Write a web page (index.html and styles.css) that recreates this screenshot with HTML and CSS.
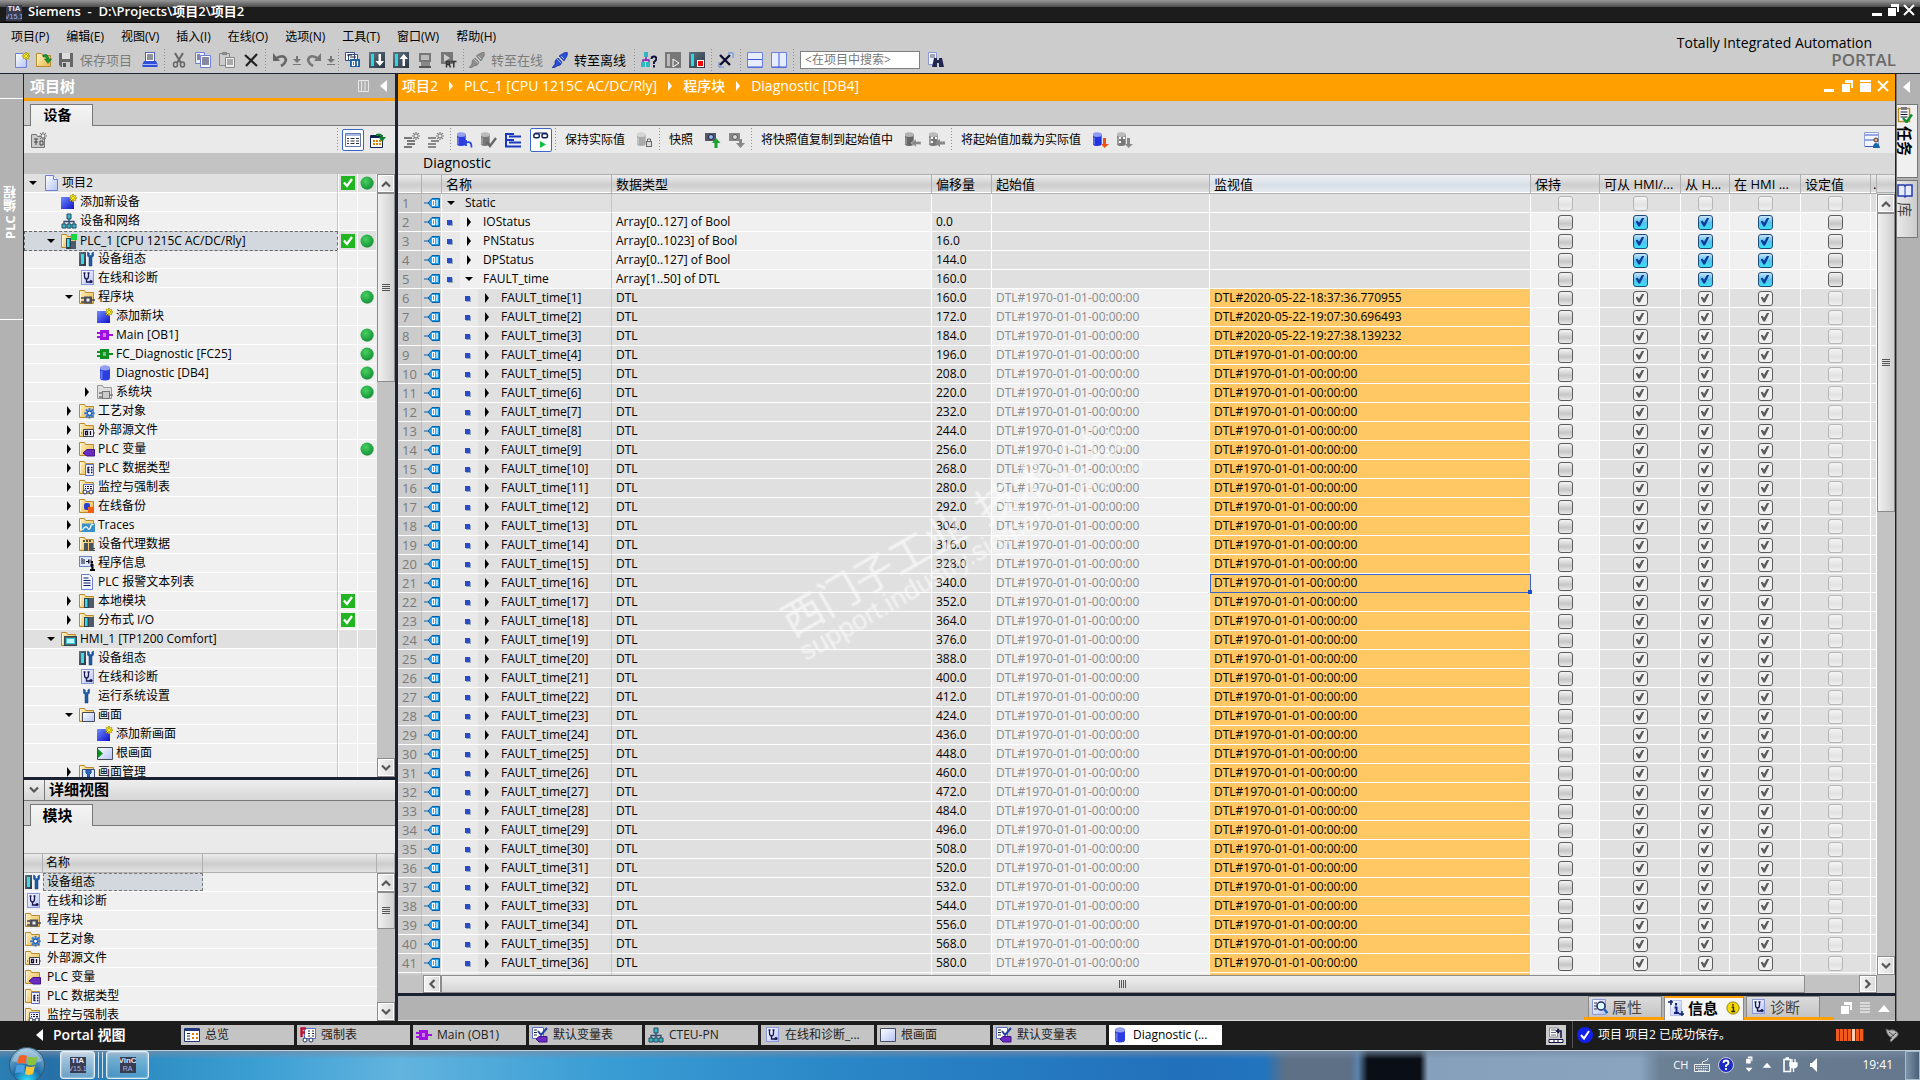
FILE: index.html
```html
<!DOCTYPE html>
<html lang="zh-CN">
<head>
<meta charset="utf-8">
<title>Siemens - D:\Projects\项目2\项目2</title>
<link rel="stylesheet" href="styles.css">
</head>
<body>
<svg class="defs" aria-hidden="true">
  <defs>
    <linearGradient id="gFold" x1="0" y1="0" x2="1" y2="1"><stop offset="0" stop-color="#fff3c0"/><stop offset="1" stop-color="#eab54a"/></linearGradient>
    <linearGradient id="gBlue" x1="0" y1="0" x2="1" y2="1"><stop offset="0" stop-color="#6f8cff"/><stop offset="1" stop-color="#1010c8"/></linearGradient>
    <linearGradient id="gPage" x1="0" y1="0" x2="1" y2="1"><stop offset="0" stop-color="#fff"/><stop offset="1" stop-color="#b4c2f4"/></linearGradient>
    <linearGradient id="gGray" x1="0" y1="0" x2="1" y2="1"><stop offset="0" stop-color="#c4c4c4"/><stop offset="1" stop-color="#666"/></linearGradient>
    <linearGradient id="gDark" x1="0" y1="0" x2="1" y2="1"><stop offset="0" stop-color="#5d7686"/><stop offset="1" stop-color="#2a3440"/></linearGradient>
    <radialGradient id="gGreen" cx=".4" cy=".35" r=".7"><stop offset="0" stop-color="#48d060"/><stop offset="1" stop-color="#109034"/></radialGradient>
    <radialGradient id="gOrb" cx=".5" cy=".95" r=".9"><stop offset="0" stop-color="#2fe0ff"/><stop offset=".45" stop-color="#1a6ca8"/><stop offset="1" stop-color="#8fb8d4"/></radialGradient>
    <g id="folder"><path d="M.5 14.500V1.500h5l1 2h8v11z" fill="url(#gFold)" stroke="#b98a2c"/><path d="M1.500 13V2.500" stroke="#fff6d8"/></g>
    <g id="star"><path d="M12 0v8M8 4h8M9.200 1.200l5.600 5.600M14.800 1.200L9.200 6.800" stroke="#8a7a00" stroke-width="1.600"/><path d="M12 .5v7M8.500 4h7M9.500 1.500l5 5M14.500 1.500l-5 5" stroke="#ffef20"/></g>
    <g id="graystar"><path d="M12 0v8M8 4h8M9.200 1.200l5.600 5.600M14.800 1.200L9.200 6.800" stroke="#777" stroke-width="1.200"/><circle cx="12" cy="4" r="1.400" fill="#eee"/></g>
    <g id="wrenchshape"><path d="M9.500 1v4l1.500 1.500V15h3V6.500L15.500 5V1l-1.700 1v2.500h-2.500V2z" fill="#1c5ba8" stroke="#123c78" stroke-width=".5"/></g>
    <g id="steth"><rect x="2.500" y=".5" width="12" height="14" fill="url(#gPage)" stroke="#8a98dc"/><path d="M5.500 3v3q0 3 2 3t2-3V3M7.500 9v3h3.500M4.500 3h2M8.500 3h2" fill="none" stroke="#181850" stroke-width="1.300"/><circle cx="12" cy="11.500" r="1.600" fill="#181850"/></g>
    <g id="blockshape"><path d="M0 6h4M0 10h4M12 8h4" stroke="currentColor" stroke-width="2"/><rect x="3" y="3" width="9" height="10" fill="currentColor"/><rect x="6" y="6" width="3" height="4" fill="#fff" opacity=".45"/></g>
    <g id="cyl"><path d="M3 3v10q0 2.500 5 2.500t5-2.500V3z" fill="currentColor"/><ellipse cx="8" cy="3" rx="5" ry="2.500" fill="currentColor"/><ellipse cx="8" cy="3" rx="5" ry="2.500" fill="#fff" opacity=".5"/><path d="M4.500 6v8" stroke="#fff" opacity=".3" stroke-width="2"/></g>
  </defs>
  <symbol id="i-page" viewBox="0 0 16 16"><path d="M2.500.5h8l4 4v11h-12z" fill="url(#gPage)" stroke="#6c80d8"/><path d="M10.500.5v4h4" fill="#fff" stroke="#6c80d8"/></symbol>
  <symbol id="i-new" viewBox="0 0 16 16"><path d="M1.500 1.500h8l3 3v11h-11z" fill="url(#gPage)" stroke="#6c80d8"/><use href="#star"/></symbol>
  <symbol id="i-open" viewBox="0 0 16 16"><use href="#folder"/><path d="M7 3q5-2 6 4h2.500L12 11.500 8.500 7H11q-1-3-4-2z" fill="#129a30" stroke="#0a6a20" stroke-width=".6"/></symbol>
  <symbol id="i-save" viewBox="0 0 16 16"><path d="M1 1h14v14H3l-2-2z" fill="#666"/><rect x="4" y="1" width="8" height="6" fill="#ddd"/><rect x="4" y="10" width="8" height="5" fill="#ccc"/><rect x="5" y="11" width="3" height="4" fill="#555"/></symbol>
  <symbol id="i-print" viewBox="0 0 16 16"><rect x="3.500" y=".5" width="9" height="9" fill="#fff" stroke="#5060b0"/><path d="M5 3h6M5 5h6M5 7h6" stroke="#223"/><path d="M2 9h12l1.500 3v3H.5v-3z" fill="#3050d8"/><path d="M1 12.500h14" stroke="#a8b8ff"/></symbol>
  <symbol id="i-cut" viewBox="0 0 16 16"><path d="M4 1l6 10M12 1L6 11" stroke="#666" stroke-width="2"/><ellipse cx="4.500" cy="12.500" rx="2" ry="2.500" fill="none" stroke="#666" stroke-width="1.500"/><ellipse cx="11.500" cy="12.500" rx="2" ry="2.500" fill="none" stroke="#666" stroke-width="1.500"/></symbol>
  <symbol id="i-copy" viewBox="0 0 16 16"><path d="M.5.5h9v11h-9z" fill="#eef" stroke="#6c80d8"/><path d="M2 3h3M2 5h3M2 7h3" stroke="#223"/><path d="M5.500 3.500h10v12h-10z" fill="#fff" stroke="#6c80d8"/><path d="M7 6h7M7 8h7M7 10h7M7 12h7" stroke="#114"/></symbol>
  <symbol id="i-paste" viewBox="0 0 16 16"><path d="M.5 1.500h10v12H.5z" fill="#ccc" stroke="#888"/><rect x="3" y="0" width="5" height="3" fill="#888"/><path d="M6.500 5.500h9v10h-9z" fill="#eee" stroke="#888"/><path d="M8 8h6M8 10h6M8 12h6" stroke="#666"/></symbol>
  <symbol id="i-x" viewBox="0 0 16 16"><path d="M2 3l12 11M14 2L3 14" stroke="#222" stroke-width="2.200"/></symbol>
  <symbol id="i-undo" viewBox="0 0 16 16"><path d="M3 7q9-6 11 1-1 4-5 6" fill="none" stroke="#666" stroke-width="2.600"/><path d="M1 1v8h7z" fill="#666"/></symbol>
  <symbol id="i-redo" viewBox="0 0 16 16"><path d="M13 7Q4 1 2 8q1 4 5 6" fill="none" stroke="#777" stroke-width="2.600"/><path d="M15 1v8H8z" fill="#777"/></symbol>
  <symbol id="i-drop" viewBox="0 0 8 16"><path d="M3 4h2v3h3L4 11 0 7h3zM0 12h8v1H0z" fill="#777"/></symbol>
  <symbol id="i-compile" viewBox="0 0 16 16"><path d="M.5.5h9v8h-9zM3.500 2.500h9v6h-9z" fill="#fff" stroke="#3a4a90"/><path d="M2 3h5M5 5h6" stroke="#223"/><rect x="5" y="7" width="10" height="8" fill="#2060a0"/><path d="M7.500 9.500h2v4h-2zM12.500 9v5" fill="none" stroke="#fff" stroke-width="1.200"/></symbol>
  <symbol id="i-dl" viewBox="0 0 16 16"><rect width="16" height="16" fill="url(#gDark)"/><rect x="2" y="2" width="3" height="12" fill="#2ed8e0"/><path d="M9.500 2h2.500v7h3l-4.200 5L6.500 9h3z" fill="#fff"/></symbol>
  <symbol id="i-ul" viewBox="0 0 16 16"><rect width="16" height="16" fill="url(#gDark)"/><rect x="2" y="2" width="3" height="12" fill="#2ed8e0"/><path d="M9.500 14h2.500V7h3l-4.200-5L6.500 7h3z" fill="#fff"/></symbol>
  <symbol id="i-pc" viewBox="0 0 16 16"><rect x="2" y="1" width="12" height="9" fill="#777"/><rect x="4" y="3" width="8" height="5" fill="#bbb"/><rect x="4" y="10" width="9" height="5" fill="#888"/><path d="M2 15h12" stroke="#555" stroke-width="2"/></symbol>
  <symbol id="i-rt" viewBox="0 0 16 16"><rect x="0" y="0" width="12" height="12" fill="#777"/><path d="M3 2l6 4-6 4z" fill="#ccc"/><path d="M5.500 15.500v-6H8.500v3H6M8 12.500l1.500 3M10 9.500h5.500M12.800 10v5.500" fill="none" stroke="#333" stroke-width="1.500"/></symbol>
  <symbol id="i-plug0" viewBox="0 0 16 16"><path d="M0 16l3-4q-1-4 3-6l4 4q-1 4-5 4l-3 2zM7 4l3-2q3-2 5-2 1 1 0 4l-3 5z" fill="#8e8e8e" stroke="#6a6a6a" stroke-width=".6"/><path d="M5 7l4 4M9 4l3 3" stroke="#c8c8c8"/></symbol>
  <symbol id="i-plug1" viewBox="0 0 16 16"><path d="M0 16l3-4q-1-4 3-6l4 4q-1 4-5 4l-3 2zM7 4l3-2q3-2 5-2 1 1 0 4l-3 5z" fill="#2a50d8" stroke="#102080" stroke-width=".6"/><path d="M5 7l4 4M9 4l3 3" stroke="#9bc0ff"/></symbol>
  <symbol id="i-nethelp" viewBox="0 0 16 16"><rect x="3" y="0" width="4" height="5" fill="#30b8c0"/><path d="M5 5v4M2 12V8h6v4" stroke="#8020b0" fill="none" stroke-width="1.400"/><rect y="10" width="4" height="5" fill="#30b8c0"/><rect x="5" y="10" width="4" height="5" fill="#30b8c0"/><path d="M10.500 7q0-2.500 2.500-2.500T15.200 7q0 1.500-2.200 3v2M13 13v2.500" fill="none" stroke="#101040" stroke-width="1.900"/></symbol>
  <symbol id="i-cpurun" viewBox="0 0 16 16"><rect width="16" height="16" fill="#777"/><rect x="2" y="2" width="3" height="12" fill="#bbb"/><path d="M8 7l6 4-6 4z" fill="#777" stroke="#fff"/></symbol>
  <symbol id="i-cpustop" viewBox="0 0 16 16"><rect width="16" height="16" fill="url(#gDark)"/><rect x="2" y="2" width="3" height="12" fill="#2ed8e0"/><rect x="8.500" y="8.500" width="6" height="6" fill="#f00" stroke="#fff"/></symbol>
  <symbol id="i-xref" viewBox="0 0 16 16"><path d="M10 1h5v5M1 10v5h5" fill="#cfe0ff" stroke="#5a80c8"/><path d="M2 3l10 10M12 3L2 13" stroke="#101030" stroke-width="2.400"/></symbol>
  <symbol id="i-splith" viewBox="0 0 16 16"><path d="M.5.5h15v15H.5z" fill="#e8ecff" stroke="#6c80e0"/><path d="M1 7.500h14M1 15h14" stroke="#3a58d8"/></symbol>
  <symbol id="i-splitv" viewBox="0 0 16 16"><path d="M.5.5h15v15H.5z" fill="#e8ecff" stroke="#6c80e0"/><path d="M8 1v14M1 15h14" stroke="#3a58d8"/></symbol>
  <symbol id="i-binoc" viewBox="0 0 16 16"><path d="M.5.5h8v12h-8z" fill="#f0f4ff" stroke="#8898d8"/><path d="M2 3h5M2 5h5" stroke="#556"/><path d="M6 6h3v2h2V6h3l2 9h-5v-4H9v4H4z" fill="#202850"/></symbol>
  <symbol id="i-addobj" viewBox="0 0 16 16"><rect x="0" y="3" width="13" height="12" fill="url(#gBlue)"/><use href="#star"/></symbol>
  <symbol id="i-net" viewBox="0 0 16 16"><path d="M8 5v4M3 12V8.500h10V12M8 8v4" fill="none" stroke="#304870" stroke-width="1.300"/><path d="M6 1h4v5H6zM1 11h4v4H1zM6 11h4v4H6zM11 11h4v4h-4z" fill="#35b8c8" stroke="#2a4a60"/></symbol>
  <symbol id="i-cfg" viewBox="0 0 16 16"><rect x="0" y="1" width="7" height="14" fill="url(#gDark)"/><rect x="2" y="3" width="3" height="10" fill="#3adbe8"/><use href="#wrenchshape" x="-1"/></symbol>
  <symbol id="i-diag" viewBox="0 0 16 16"><use href="#steth"/></symbol>
  <symbol id="i-wrench" viewBox="0 0 16 16"><use href="#wrenchshape" x="-5"/></symbol>
  <symbol id="i-fblock" viewBox="0 0 16 16"><use href="#folder"/><path d="M2 9h3M2 13h3M13 11h3" stroke="#445" stroke-width="1.400"/><rect x="5" y="7.500" width="8" height="7" fill="#4a4e5c"/><rect x="7.500" y="9.500" width="3" height="3" fill="#eee"/></symbol>
  <symbol id="i-fsys" viewBox="0 0 16 16"><path d="M.5 14.500V1.500h5l1 2h8v11z" fill="#ddd" stroke="#999"/><path d="M2 9h3M2 13h3M13 11h3" stroke="#777" stroke-width="1.400"/><rect x="5.500" y="7.500" width="7" height="7" fill="#ccc" stroke="#777"/></symbol>
  <symbol id="i-fgear" viewBox="0 0 16 16"><use href="#folder"/><path d="M10.500 5v10.500M5.200 10.200h10.500M7 6.500l7 7.500M14 6.500L7 14" stroke="#2a78e0" stroke-width="2"/><circle cx="10.500" cy="10.200" r="2" fill="#fff" stroke="#1850b0"/></symbol>
  <symbol id="i-fsrc" viewBox="0 0 16 16"><use href="#folder"/><path d="M4.500 7.500h10v7h-10zM3 11h-1M15 11h1" fill="#f4f4ff" stroke="#445"/><path d="M6.500 9.500h2v3h-2zM11.500 9v4" fill="none" stroke="#112" stroke-width="1.300"/></symbol>
  <symbol id="i-ftag" viewBox="0 0 16 16"><use href="#folder"/><path d="M4 12l4-3.500h7.500V15H8z" fill="#6a2cc0" stroke="#40148a"/></symbol>
  <symbol id="i-ftype" viewBox="0 0 16 16"><use href="#folder"/><path d="M6.500 4.500h8v11h-8z" fill="#f0f2ff" stroke="#5a70c8"/><path d="M9 7v6M9 7.500h1.500M9 10h1.500M9 12.500h1.500M12 7.500h1.500M12 10h1.500M12 12.500h1.500" stroke="#114" stroke-width="1.300"/></symbol>
  <symbol id="i-fwatch" viewBox="0 0 16 16"><use href="#folder"/><path d="M4.500 5.500h10v7h-10z" fill="#f0f2ff" stroke="#5a70c8"/><path d="M6 7.500h1M8 7.500h2M11 7.500h2M6 9.500h1M8 9.500h2M11 9.500h2" stroke="#114"/><circle cx="6" cy="13" r="2" fill="#fff" stroke="#223468"/><circle cx="12" cy="13" r="2" fill="#fff" stroke="#223468"/></symbol>
  <symbol id="i-fback" viewBox="0 0 16 16"><use href="#folder"/><rect x="5" y="5" width="6" height="7" rx="2" fill="#2a40d0"/><path d="M9 9h6v6H9z" fill="#f06010"/></symbol>
  <symbol id="i-ftrace" viewBox="0 0 16 16"><use href="#folder"/><path d="M3 6.500h13V15H3z" fill="#3a90c8"/><path d="M3.500 13q3-5 5-2t3-1 3-2" fill="none" stroke="#fff" stroke-width="1.300"/></symbol>
  <symbol id="i-fproxy" viewBox="0 0 16 16"><use href="#folder"/><path d="M5 7h4v8H5zM10 7h4v8h-4z" fill="#4a5260"/><path d="M4 5h2M7 5h2M10 5h2M15 12v1M15 14v1" stroke="#222" stroke-width="1.600"/></symbol>
  <symbol id="i-info" viewBox="0 0 16 16"><rect x=".5" y="1.500" width="12" height="10" fill="#e0e8ff" stroke="#7080b8"/><path d="M2 4h2M2 6h2M2 8h2M5 4v5M7 6.500h2M9.500 4.500v4M11 4.500v4" stroke="#112"/><path d="M13 6v2.500M11.500 10h2v5M11 15h5" stroke="#000" stroke-width="2"/></symbol>
  <symbol id="i-text" viewBox="0 0 16 16"><path d="M2.500.5h8l3 3v12h-11z" fill="#f4f6ff" stroke="#6c80d8"/><path d="M4.500 4h5M4.500 6.500h7M4.500 9h7M4.500 11.500h7" stroke="#102060" stroke-width="1.200"/></symbol>
  <symbol id="i-fmod" viewBox="0 0 16 16"><use href="#folder"/><rect x="5" y="5" width="5" height="10" fill="#31424e"/><rect x="6" y="6" width="2.500" height="8" fill="#3adbe8"/><rect x="10" y="5" width="5" height="10" fill="#4c5a6a"/></symbol>
  <symbol id="i-plc" viewBox="0 0 16 16"><use href="#folder"/><rect x="5" y="5" width="5" height="11" fill="#31424e"/><rect x="6" y="6" width="2.500" height="8" fill="#3adbe8"/><rect x="10" y="8" width="5" height="8" fill="#4c5a6a"/><rect x="10" y="1" width="6" height="6" fill="#10d840"/></symbol>
  <symbol id="i-hmi" viewBox="0 0 16 16"><use href="#folder"/><rect x="3.500" y="5.500" width="12" height="9" fill="#55636f" stroke="#3a4650"/><rect x="5.500" y="7.500" width="8" height="5" fill="#bff6ff" stroke="#38c8d8"/></symbol>
  <symbol id="i-fscreen" viewBox="0 0 16 16"><use href="#folder"/><path d="M3.500 5.500h12v9h-12z" fill="url(#gPage)" stroke="#444c5c"/></symbol>
  <symbol id="i-screen" viewBox="0 0 16 16"><path d="M.5 1.500h15v13H.5z" fill="url(#gPage)" stroke="#444c5c"/></symbol>
  <symbol id="i-root" viewBox="0 0 16 16"><path d="M.5 2.500h15v12H.5z" fill="url(#gPage)" stroke="#444c5c"/><path d="M1 4l5 4.500L1 13z" fill="#0d9020"/></symbol>
  <symbol id="i-fmgmt" viewBox="0 0 16 16"><use href="#folder"/><path d="M3.500 5.500h12v10h-12z" fill="#dfe6ff" stroke="#3a4a80"/><path d="M7 6v3l1.500 1.500V15h2v-4.500L12 9V6" fill="#2c68b8" stroke="#1a4a90"/></symbol>
  <symbol id="i-ob" viewBox="0 0 16 16"><use href="#blockshape" color="#a010e0"/></symbol>
  <symbol id="i-fc" viewBox="0 0 16 16"><use href="#blockshape" color="#109020"/></symbol>
  <symbol id="i-db" viewBox="0 0 16 16"><use href="#cyl" color="#2a3ee0"/></symbol>
  <symbol id="i-addgray" viewBox="0 0 16 16"><path d="M.5 15.500v-13h5l1 2h7v11z" fill="#ccc" stroke="#777"/><path d="M3 7h4M3 10h4M5 7v6M9 9h3v4H9z" stroke="#444" fill="none"/><use href="#graystar"/></symbol>
  <symbol id="i-list" viewBox="0 0 16 16"><path d="M.5 1.500h15v13H.5z" fill="#fff" stroke="#6478b0"/><path d="M1 3h14" stroke="#a8b8e0" stroke-width="2"/><path d="M2 6.500h2M5.500 6.500h4M11 6.500h3M2 9h2M5.500 9h4M11 9h3M2 11.500h2M5.500 11.500h4M11 11.500h3" stroke="#334"/></symbol>
  <symbol id="i-listgo" viewBox="0 0 16 16"><path d="M.5 3.500h12v12H.5z" fill="#fff" stroke="#102050"/><path d="M1 5h11" stroke="#102050" stroke-width="2"/><path d="M3 9h2M6 9h2M9 9h2M3 12h2M6 12h2M9 12h2" stroke="#e08000" stroke-width="2"/><path d="M6 2q6-2 7 3h3l-4 5-3.500-5H11q-1-2-5-1z" fill="#108030"/></symbol>
  <symbol id="i-rowadd" viewBox="0 0 16 16"><path d="M0 6h8M3 9h8M3 12h8M0 15h8" stroke="#777" stroke-width="2"/><use href="#graystar"/></symbol>
  <symbol id="i-rowadd2" viewBox="0 0 16 16"><path d="M0 6h8M3 9h8M0 12h8M0 15h8" stroke="#888" stroke-width="2"/><use href="#graystar"/></symbol>
  <symbol id="i-dbreset" viewBox="0 0 16 16"><g transform="translate(-3)scale(.9)"><use href="#cyl" color="#2a3ee0"/></g><path d="M9 8v6M9 10.500q6-2 5.500 5" stroke="#2848d8" fill="none" stroke-width="1.800"/></symbol>
  <symbol id="i-dbok" viewBox="0 0 16 16"><g transform="translate(-3)scale(.9)"><use href="#cyl" color="#777"/></g><path d="M6 10l3 4 6-8" stroke="#666" fill="none" stroke-width="2.400"/></symbol>
  <symbol id="i-levels" viewBox="0 0 16 16"><path d="M0 2h9M4 4.500h12M0 8h9M4 10.500h12M0 14.500h16" stroke="#1838c0" stroke-width="2"/><path d="M1 2v12" stroke="#1838c0" stroke-width="2"/></symbol>
  <symbol id="i-watch" viewBox="0 0 16 16"><path d="M2 1h12" stroke="#102060"/><rect x=".8" y="1.800" width="5.500" height="4" rx="1.500" fill="none" stroke="#102060" stroke-width="1.500"/><rect x="9" y="1.800" width="5.500" height="4" rx="1.500" fill="none" stroke="#102060" stroke-width="1.500"/><path d="M7 9l6 3.500L7 16z" fill="#10c040"/></symbol>
  <symbol id="i-dblock" viewBox="0 0 16 16"><g transform="translate(-3)scale(.9)"><use href="#cyl" color="#aaa"/></g><rect x="9.500" y="9.500" width="5" height="5" fill="#ddd" stroke="#666"/><path d="M10.500 9V7h3v2" fill="none" stroke="#666"/></symbol>
  <symbol id="i-snapup" viewBox="0 0 16 16"><path d="M0 1h11v8H0z" fill="#556"/><circle cx="6" cy="5" r="2.500" fill="#9ab8ff" stroke="#223"/><path d="M11 6l4.500 5H12.500v5h-3v-5H7z" fill="#18a030"/></symbol>
  <symbol id="i-snapdn" viewBox="0 0 16 16"><path d="M0 1h11v8H0z" fill="#888"/><circle cx="6" cy="5" r="2.500" fill="#ddd" stroke="#555"/><path d="M11.500 16L7 11h3V7h3v4h3z" fill="#888"/></symbol>
  <symbol id="i-dbleft" viewBox="0 0 16 16"><g transform="translate(-3)scale(.9)"><use href="#cyl" color="#666"/></g><path d="M6 11l5-4v2.500h5v3h-5V15z" fill="#888" stroke="#ddd" stroke-width=".5"/></symbol>
  <symbol id="i-dbdots" viewBox="0 0 16 16"><g transform="translate(-3)scale(.9)"><use href="#cyl" color="#777"/></g><path d="M2 6h2M6 6h2M2 10h2" stroke="#fff" stroke-width="2"/><path d="M6 11l5-4v2.500h5v3h-5V15z" fill="#888"/></symbol>
  <symbol id="i-dbload" viewBox="0 0 16 16"><g transform="translate(-3)scale(.9)"><use href="#cyl" color="#2034e0"/></g><path d="M11.500 16L8 12h2V6h3v6h3z" fill="#f05010"/></symbol>
  <symbol id="i-dbload2" viewBox="0 0 16 16"><g transform="translate(-3)scale(.9)"><use href="#cyl" color="#777"/></g><path d="M2 6h2M6 6h2M2 10h2" stroke="#fff" stroke-width="2"/><path d="M11.500 16L8 12h2V6h3v6h3z" fill="#888"/></symbol>
  <symbol id="i-userview" viewBox="0 0 16 16"><path d="M.5.5h14v14H.5z" fill="#f4f6ff" stroke="#90a0d8"/><path d="M1 3h13M1 8h13M1 14.500h13" stroke="#3858c8"/><circle cx="12" cy="8" r="2" fill="#e8b888" stroke="#432"/><path d="M9 16q0-5 3-5t4 5z" fill="#1868a8"/></symbol>
  <symbol id="i-tag" viewBox="0 0 16 16"><path d="M0 8h4l4-4.500h7.500v9H8L4 8" fill="#18a0f0" stroke="#0a60a8"/><path d="M8.500 5.500h2v5h-2zM13 5v6" fill="none" stroke="#fff" stroke-width="1.200"/></symbol>
  <symbol id="i-ok" viewBox="0 0 16 16"><rect x="1" y="1" width="14" height="14" fill="#22b522"/><path d="M4 7.500l3 3.500 5-7" fill="none" stroke="#fff" stroke-width="2.300"/></symbol>
  <symbol id="i-dot" viewBox="0 0 16 16"><circle cx="8.500" cy="8.500" r="6.500" fill="#a8b0a8" opacity=".6"/><circle cx="8" cy="8" r="6.500" fill="url(#gGreen)"/></symbol>
  <symbol id="i-right" viewBox="0 0 12 12"><path d="M4 1l4 5-4 5z"/></symbol>
  <symbol id="i-down" viewBox="0 0 12 12"><path d="M2 4h8L6 8z"/></symbol>
  <symbol id="i-chev" viewBox="0 0 12 12"><path d="M2 8.500l4-4 4 4" fill="none" stroke="#555" stroke-width="2.200"/></symbol>
  <symbol id="i-overview" viewBox="0 0 16 16"><path d="M.5 1.500h15v13H.5z" fill="#fff" stroke="#203878"/><path d="M1 3h14" stroke="#203878" stroke-width="2"/><path d="M3 6.500h3M3 9h3M3 12h3" stroke="#223"/><path d="M8 7h2M12 7h2M8 11h2M12 11h2" stroke="#e08000" stroke-width="2"/></symbol>
  <symbol id="i-force" viewBox="0 0 16 16"><path d="M4.500 1.500h11v10h-11z" fill="#fff" stroke="#5a70c8"/><path d="M8 4h2M12 4h2M8 6.500h2M12 6.500h2M8 9h2M12 9h2" stroke="#223"/><path d="M1.500 10V1.500H6M1.500 5.500H5" fill="none" stroke="#c01030" stroke-width="2.400"/><circle cx="5" cy="13" r="2" fill="#fff" stroke="#223468"/><circle cx="11" cy="13" r="2" fill="#fff" stroke="#223468"/></symbol>
  <symbol id="i-vars" viewBox="0 0 16 16"><path d="M.5.500h11v11H.5z" fill="#fff" stroke="#5a70c8"/><path d="M2 3h3M2 5.500h3M2 8h3" stroke="#223"/><path d="M6 4l3 4 6-7" fill="none" stroke="#2040a0" stroke-width="2"/><path d="M4 12l3-2.500h8V15H7z" fill="#6a2cc0" stroke="#40148a"/></symbol>
  <symbol id="i-min" viewBox="0 0 14 14"><path d="M2 10h10v3H2z" fill="#fff"/></symbol>
  <symbol id="i-restore" viewBox="0 0 14 14"><path d="M5 1h8v8h-2V4H5zM2 5h8v8H2z" fill="#fff"/></symbol>
  <symbol id="i-max" viewBox="0 0 14 14"><path d="M2 1h11v2H2zM2 4h11v9H2z" fill="#fff"/></symbol>
  <symbol id="i-close" viewBox="0 0 14 14"><path d="M2 2l10 10M12 2L2 12" stroke="#fff" stroke-width="2"/></symbol>
  <symbol id="i-left" viewBox="0 0 10 14"><path d="M8 1v12L1 7z" fill="#fff"/></symbol>
  <symbol id="i-up" viewBox="0 0 14 14"><path d="M1 11h12L7 4z" fill="#fff"/></symbol>
  <symbol id="i-rows" viewBox="0 0 14 14"><path d="M2 2h10M2 5h10M2 8h10M2 11h10" stroke="#e6e6e6" stroke-width="1.500"/></symbol>
  <symbol id="i-cols" viewBox="0 0 14 14"><path d="M1.500 1.500h10v11h-10zM4.500 2v10M8 2v10" fill="none" stroke="#e8e8e8"/></symbol>
  <symbol id="i-props" viewBox="0 0 16 16"><path d="M.5.500h13v15H.5z" fill="url(#gPage)" stroke="#8a98dc"/><path d="M2 4h3M2 7h3M2 10h3" stroke="#334"/><circle cx="9" cy="7" r="4" fill="#dff" stroke="#202868" stroke-width="1.500"/><path d="M12 10l3.500 4" stroke="#2068c0" stroke-width="2.500"/></symbol>
  <symbol id="i-msg" viewBox="0 0 16 16"><path d="M2.500.500h11v15h-11z" fill="url(#gPage)" stroke="#b8c0e8"/><path d="M0 2h5M3 0v5M11 14h5M14 11v5" stroke="#112060" stroke-width="1.500"/><path d="M8 3v2.500M6.500 7.500h2V13M6 13h5" stroke="#102080" stroke-width="2" fill="none"/></symbol>
  <symbol id="i-warn" viewBox="0 0 16 16"><circle cx="8" cy="8" r="7" fill="#f4d800" stroke="#8a7800"/><path d="M8 3.500v2M6.500 7h2v5M6 12h4.500" stroke="#222" stroke-width="1.600" fill="none"/></symbol>
  <symbol id="i-tasks" viewBox="0 0 16 16"><path d="M1.500 1.500h11v13h-11z" fill="#fff" stroke="#b98a2c" stroke-width="1.500"/><rect x="4" y="0" width="6" height="3" fill="#778"/><path d="M3.500 5h7M3.500 7.500h7M3.500 10h7" stroke="#114"/><path d="M6 11l3.500 4L15 7.500" fill="none" stroke="#109030" stroke-width="2.500"/></symbol>
  <symbol id="i-book" viewBox="0 0 16 16"><path d="M1 2h6l1 1 1-1h6v11H9l-1 1-1-1H1z" fill="#e8ecff" stroke="#2038b0" stroke-width="1.500"/><path d="M8 3v11" stroke="#2038b0"/></symbol>
  <symbol id="i-sheet" viewBox="0 0 16 16"><path d="M1.500 1h8v9h-8z" fill="#fff" stroke="#889"/><path d="M3 3h5M3 5.500h5M3 8h5" stroke="#667"/><path d="M1 12.500h14v3H1zM6 12v4M10 12v4" fill="#fff" stroke="#114"/><path d="M9 4h4v7M11 2L8.500 4 11 6" stroke="#114" fill="none" stroke-width="1.500"/></symbol>
  <symbol id="i-saved" viewBox="0 0 16 16"><circle cx="8" cy="8" r="8" fill="#1220e8"/><path d="M4 8l3 3.500L12 4" fill="none" stroke="#fff" stroke-width="2"/></symbol>
  <symbol id="i-conn" viewBox="0 0 16 16"><path d="M2 2q3 2 5 1t6 2q3 3-2 6l-4 4-1-2 2-2q-4-2-5-5z" fill="#bbb" stroke="#666"/><path d="M5 5l5 4M6 11l6-5" stroke="#444"/></symbol>
  <symbol id="i-kbd" viewBox="0 0 16 16"><path d="M.5 7.500h15v7H.5zM8 7q0-3 3-3t3-3" fill="none" stroke="#eee"/><path d="M2 9.500h12M2 11.500h12M4 13.300h8" stroke="#eee" stroke-dasharray="1.500 .8"/></symbol>
  <symbol id="i-help" viewBox="0 0 16 16"><circle cx="8" cy="8" r="7.500" fill="#1a2cc0" stroke="#ccd"/><path d="M5.500 6q0-2.500 2.500-2.500T10.500 6q0 1.300-2.500 2.500v1.500M8 11v2" fill="none" stroke="#fff" stroke-width="1.800"/></symbol>
  <symbol id="i-power" viewBox="0 0 16 16"><path d="M2 2.500h6.500v12H2zM3.500 1h3.500" fill="none" stroke="#fff" stroke-width="1.600"/><path d="M8 6h7v3q-1 2-3.500 2T8 9zM10 2v4M13 2v4M11.500 11v4" fill="#fff" stroke="#fff" stroke-width="1.300"/></symbol>
  <symbol id="i-vol" viewBox="0 0 16 16"><path d="M4 6h2l5-5v14l-5-5H4z" fill="#fff"/></symbol>
  <symbol id="i-orb" viewBox="0 0 36 36"><circle cx="18" cy="18" r="17.500" fill="url(#gOrb)" stroke="#33566f"/><path d="M3 14Q9 1 18 2t15 12q-15 6-30 0z" fill="#fff" opacity=".3"/><path d="M10 9q4-2 8 0l-1.500 8q-4-2-8.500 0z" fill="#f0602a"/><path d="M19.500 9.500q4 2 9 0l-2 8q-4.500 2-8.500 0z" fill="#8cc43a"/><path d="M7.500 18.500q4-2 8.500 0l-1.500 8q-4-2-8.500 0z" fill="#48a0e0"/><path d="M17.500 19q4 2 8.500 0l-2 8q-4.500 2-8 0z" fill="#fbc63a"/></symbol>
</svg>

<header class="titlebar">
  <span class="logo"><b>TIA</b><b>V15.1</b></span>
  <h1>Siemens &nbsp;-&nbsp; D:\Projects\项目2\项目2</h1>
  <div class="winbtns">
    <button aria-label="最小化"><svg class="i14"><use href="#i-min"/></svg></button>
    <button aria-label="还原"><svg class="i14"><use href="#i-restore"/></svg></button>
    <button aria-label="关闭"><svg class="i14"><use href="#i-close"/></svg></button>
  </div>
</header>

<div class="topbar">
  <div class="topleft">
    <nav class="menu">
      <a href="#">项目(P)</a><a href="#">编辑(E)</a><a href="#">视图(V)</a><a href="#">插入(I)</a><a href="#">在线(O)</a><a href="#">选项(N)</a><a href="#">工具(T)</a><a href="#">窗口(W)</a><a href="#">帮助(H)</a>
    </nav>
    <div class="tools" id="mainTools"></div>
  </div>
  <div class="brand"><span>Totally Integrated Automation</span><strong>PORTAL</strong></div>
</div>

<main class="work">
  <aside class="rail rail-left"><div class="rail-head"></div><div class="rail-name"><span>PLC 编程</span></div></aside>

  <section class="left">
    <div class="panel-head"><h2>项目树</h2><svg class="i14"><use href="#i-cols"/></svg><svg class="arrowl"><use href="#i-left"/></svg></div>
    <div class="tabstrip"><button class="tab">设备</button></div>
    <div class="tools treetools">
      <button class="tb" aria-label="添加"><svg class="ic"><use href="#i-addgray"/></svg></button>
      <span class="grow"></span><i class="sep"></i>
      <button class="tb on" aria-label="列表"><svg class="ic"><use href="#i-list"/></svg></button>
      <button class="tb" aria-label="转到"><svg class="ic"><use href="#i-listgo"/></svg></button>
    </div>
    <div class="treegap"></div>
    <div class="treewrap">
      <ul class="tree" id="tree"></ul>
      <div class="vscroll vs-tree"><button aria-label="向上"><svg class="i12"><use href="#i-chev"/></svg></button><div class="thumb"></div><div class="rest"></div><button class="dn" aria-label="向下"><svg class="i12"><use href="#i-chev"/></svg></button></div>
    </div>
    <div class="detail">
      <div class="detail-head"><button aria-label="折叠"><svg class="i12 flip"><use href="#i-chev"/></svg></button><h2>详细视图</h2></div>
      <div class="tabstrip"><button class="tab">模块</button></div>
      <div class="detail-gap"></div>
      <div class="detail-cols"><span></span><span>名称</span><span></span><span></span></div>
      <div class="detail-body">
        <ul class="dlist" id="dlist"></ul>
        <div class="vscroll vs-detail"><button aria-label="向上"><svg class="i12"><use href="#i-chev"/></svg></button><div class="thumb"></div><div class="rest"></div><button class="dn" aria-label="向下"><svg class="i12"><use href="#i-chev"/></svg></button></div>
      </div>
    </div>
  </section>

  <section class="editor">
    <div class="crumbs">
      <span>项目2</span><svg class="i12"><use href="#i-right"/></svg><span>PLC_1 [CPU 1215C AC/DC/Rly]</span><svg class="i12"><use href="#i-right"/></svg><span>程序块</span><svg class="i12"><use href="#i-right"/></svg><span>Diagnostic [DB4]</span>
      <div class="winbtns">
        <button aria-label="最小化"><svg class="i14"><use href="#i-min"/></svg></button>
        <button aria-label="浮动"><svg class="i14"><use href="#i-restore"/></svg></button>
        <button aria-label="最大化"><svg class="i14"><use href="#i-max"/></svg></button>
        <button aria-label="关闭"><svg class="i14"><use href="#i-close"/></svg></button>
      </div>
    </div>
    <div class="tabstrip"></div>
    <div class="tools edtools" id="edTools"></div>
    <h3 class="blockname">Diagnostic</h3>
    <div class="gridwrap">
      <div class="gridclip">
        <table class="grid">
          <colgroup><col class="c-no"><col class="c-ic"><col class="c-name"><col class="c-type"><col class="c-off"><col class="c-start"><col class="c-mon"><col class="c-keep"><col class="c-acc"><col class="c-wr"><col class="c-vis"><col class="c-set"><col class="c-more"></colgroup>
          <thead><tr><th></th><th></th><th>名称</th><th>数据类型</th><th>偏移量</th><th>起始值</th><th class="sel">监视值</th><th>保持</th><th>可从 HMI/...</th><th>从 H...</th><th>在 HMI ...</th><th>设定值</th><th>.</th></tr></thead>
          <tbody id="rows"></tbody>
        </table>
      </div>
      <div class="vside"><div class="corner"></div>
        <div class="vscroll vs-grid"><button aria-label="向上"><svg class="i12"><use href="#i-chev"/></svg></button><div class="thumb"></div><div class="rest"></div><button class="dn" aria-label="向下"><svg class="i12"><use href="#i-chev"/></svg></button></div>
      </div>
      <div class="watermark"><p>西门子工业&nbsp;&nbsp;技术论坛</p><p>support.industry.siemens.com/cs</p></div>
    </div>
    <div class="hscroll"><button class="lf" aria-label="向左"><svg class="i12"><use href="#i-chev"/></svg></button><div class="thumb"></div><div class="rest"></div><button class="rt" aria-label="向右"><svg class="i12"><use href="#i-chev"/></svg></button></div>
    <div class="inspector">
      <div class="itabs">
        <button class="itab"><svg class="ic"><use href="#i-props"/></svg>属性</button>
        <button class="itab active"><svg class="ic"><use href="#i-msg"/></svg>信息<svg class="ic end"><use href="#i-warn"/></svg></button>
        <button class="itab"><svg class="ic"><use href="#i-diag"/></svg>诊断</button>
      </div>
      <svg class="i14"><use href="#i-restore"/></svg><svg class="i14"><use href="#i-rows"/></svg><svg class="i14"><use href="#i-up"/></svg>
    </div>
  </section>

  <aside class="rail rail-right">
    <div class="rail-top"><svg class="arrowl"><use href="#i-left"/></svg></div>
    <button class="vtab vtab-tasks"><svg class="ic"><use href="#i-tasks"/></svg><span>任务</span></button>
    <button class="vtab vtab-lib"><svg class="ic"><use href="#i-book"/></svg><span>库</span></button>
  </aside>
</main>

<footer class="statusbar">
  <a href="#" class="portal"><svg class="arrowl"><use href="#i-left"/></svg>Portal 视图</a>
  <nav class="docs">
    <button><svg class="ic"><use href="#i-overview"/></svg>总览</button>
    <button><svg class="ic"><use href="#i-force"/></svg>强制表</button>
    <button><svg class="ic"><use href="#i-ob"/></svg>Main (OB1)</button>
    <button><svg class="ic"><use href="#i-vars"/></svg>默认变量表</button>
    <button><svg class="ic"><use href="#i-net"/></svg>CTEU-PN</button>
    <button><svg class="ic"><use href="#i-diag"/></svg>在线和诊断_...</button>
    <button><svg class="ic"><use href="#i-screen"/></svg>根画面</button>
    <button><svg class="ic"><use href="#i-vars"/></svg>默认变量表</button>
    <button class="cur"><svg class="ic"><use href="#i-db"/></svg>Diagnostic (...</button>
  </nav>
  <span class="sheet"><svg class="ic"><use href="#i-sheet"/></svg></span>
  <div class="status"><svg class="ic"><use href="#i-saved"/></svg><span>项目 项目2 已成功保存。</span><i class="bars"></i><svg class="ic"><use href="#i-conn"/></svg></div>
</footer>

<div class="taskbar">
  <div class="glass"></div>
  <button class="orb" aria-label="开始"><svg><use href="#i-orb"/></svg></button>
  <button class="app app1"><span class="logo"><b>TIA</b><b>V15.1</b></span></button>
  <i class="stack"></i>
  <button class="app app2"><span class="logo"><b>VinC</b><b>RA</b></span></button>
  <div class="tray">
    <span class="lang">CH</span>
    <svg class="ic"><use href="#i-kbd"/></svg><svg class="ic"><use href="#i-help"/></svg>
    <span class="mini"><svg><use href="#i-restore"/></svg><svg class="flip"><use href="#i-up"/></svg></span>
    <svg class="caret"><use href="#i-up"/></svg><svg class="ic"><use href="#i-power"/></svg><svg class="ic"><use href="#i-vol"/></svg>
    <time>19:41</time>
  </div>
  <i class="peek"></i>
</div>
<script src="script.js"></script>
</body>
</html>
```
FILE: styles.css
```css
* { box-sizing: border-box; }
body {
  margin: 0; height: 100vh; overflow: hidden;
  display: flex; flex-direction: column;
  font: 12px/18px "Open Sans", "Noto Sans", "Noto Sans CJK SC", sans-serif;
  color: #000; background: #1c1c1c;
}
h1, h2, h3, p, ul { margin: 0; padding: 0; font-weight: inherit; font-size: inherit; }
ul { list-style: none; }
a { color: inherit; text-decoration: none; }
button { font: inherit; color: inherit; border: 0; padding: 0; background: none; display: flex; align-items: center; justify-content: center; white-space: nowrap; }
svg { display: block; flex: none; }
.defs { position: absolute; width: 0; height: 0; }
.ic { width: 16px; height: 16px; }
.i14 { width: 14px; height: 14px; }
.i12 { width: 12px; height: 12px; }
.arrowl { width: 10px; height: 14px; }
.flip { transform: rotate(180deg); }
.grow { flex: 1; }

.titlebar { height: 23px; flex: none; display: flex; align-items: flex-start; padding: 2px 4px 0 6px; background: linear-gradient(#989898, #4c4c4c 7px, #1c1c1c 7px); color: #fff; border-bottom: 1px solid #000; }
.titlebar h1 { font-size: 13px; font-weight: 600; line-height: 18px; margin-left: 6px; flex: 1; }
.logo { width: 16px; height: 16px; background: #383c50; color: #e4e8f4; display: flex; flex-direction: column; align-items: center; overflow: hidden; font: 8px/8px "Liberation Sans", sans-serif; }
.logo b { font-weight: 700; font-size: 8px; }
.logo b + b { font-weight: 400; color: #a8b4e8; font-size: 7px; }
.titlebar .logo { margin-top: 3px; }
.winbtns { display: flex; gap: 4px; }
.titlebar .winbtns { gap: 2px; padding-top: 1px; }

.topbar { height: 51px; flex: none; display: flex; justify-content: space-between; background: #ccc; border-bottom: 1px solid #1b2333; }
.topleft { padding-top: 4px; }
.menu { display: flex; gap: 17px; padding-left: 11px; height: 20px; line-height: 20px; }
.brand { display: flex; flex-direction: column; align-items: flex-end; padding: 12px 24px 0 0; }
.brand span { font-size: 14px; font-weight: 500; line-height: 16px; margin-right: 24px; }
.brand strong { font-size: 17px; font-weight: 600; line-height: 17px; color: #6a6a6a; }

.tools { display: flex; align-items: center; white-space: nowrap; }
.topleft .tools { height: 26px; padding-left: 11px; font-size: 13px; }
.tb { width: 24px; height: 22px; flex: none; }
.tb.n { width: 22px; }
.tb.s svg { width: 8px; height: 16px; }
.tb.s { width: 10px; }
.tb.w { width: auto; padding: 0 6px 0 3px; gap: 6px; }
.tb.off { color: #7c7c7c; }
.tb.on { border: 1px solid #3a66c8; background: #fff; border-radius: 2px; width: 22px; }
.sep { width: 1px; height: 23px; flex: none; margin: 0 2px; background: repeating-linear-gradient(#909090 0 1px, transparent 1px 3px); }
.search { width: 120px; height: 18px; margin: 0 4px; border: 1px solid #808080; padding: 0 4px; font: inherit; font-size: 12px; background: #fff; }
.search::placeholder { color: #777; opacity: 1; }

.work { flex: 1; min-height: 0; display: flex; background: #1b2333; }
.rail { width: 23px; flex: none; background: #b2b2b2; }
.rail-left { margin-right: 1px; }
.rail-head { height: 25px; border-bottom: 1px solid #fff; }
.rail-name { height: 221px; border-bottom: 1px solid #fff; display: flex; align-items: flex-end; justify-content: center; padding-bottom: 80px; color: #fff; font-size: 13px; font-weight: 700; }
.rail-name span { writing-mode: vertical-rl; transform: rotate(180deg); white-space: nowrap; padding-left: 4px; }

.left { width: 371px; flex: none; display: flex; flex-direction: column; min-height: 0; margin-right: 3px; }
.panel-head { height: 27px; flex: none; display: flex; align-items: center; gap: 8px; background: #b2b2b2; border-bottom: 3px solid #ffa000; color: #fff; padding: 0 6px; }
.panel-head h2 { flex: 1; font-size: 15px; font-weight: 600; line-height: 20px; }
.tabstrip { height: 25px; flex: none; background: #ccc; border-bottom: 1px solid #777; padding: 3px 0 0 6px; }
.tab { width: 63px; height: 22px; font-size: 14px; font-weight: 600; line-height: 18px; background: linear-gradient(#f4f4f4, #eaeaea); border: 1px solid #777; border-bottom: 0; padding: 0 8px 2px 0; }
.treetools { height: 27px; flex: none; background: #eaeaea; padding: 0 5px 0 3px; }
.treetools .tb.on { margin: 0 2px; }
.treegap { height: 21px; flex: none; background: #c3c3c3; }
.treewrap { flex: 1; min-height: 0; display: flex; background: #f0f0f0; }
.tree { flex: 1; min-width: 0; overflow: hidden; }
.tree li { height: 19px; display: grid; grid-template-columns: 1fr 19px 19px; padding-right: 1px; }
.tree li > * { border-bottom: 1px solid #fff; border-left: 1px solid #fff; display: flex; align-items: center; justify-content: center; }
.tree li > .node { border-left: 0; border-right: 1px solid #c4c4c4; justify-content: flex-start; white-space: nowrap; padding-left: calc(3px + 18px * var(--lv)); }
.tree li.top > * { background: #e0e0e0; font-weight: 500; }
.tree li.proj > * { font-weight: 400; }
.tree li.cur > .node { background: #d2d8dd; border: 1px dashed #666; padding-left: 20px; }
.node .tw { width: 12px; height: 12px; margin-right: 4px; }
.node .ic { margin-right: 3px; }

.vscroll { width: 18px; flex: none; display: flex; flex-direction: column; background: #c3c3c3; }
.vscroll button, .hscroll button { width: 18px; height: 19px; flex: none; background: linear-gradient(90deg, #f4f4f4, #dcdcdc); border: 1px solid #8c8c8c; outline: 1px solid #fff; outline-offset: -2px; }
.vscroll .dn svg { transform: rotate(180deg); }
.thumb { border: 1px solid #8c8c8c; background: linear-gradient(90deg, #f0f0f0, #d0d0d0); display: flex; align-items: center; justify-content: center; }
.thumb::before { content: ""; width: 8px; height: 8px; background: repeating-linear-gradient(#555 0 1px, transparent 1px 2px); }
.vs-tree .thumb { flex: 188; } .vs-tree .rest { flex: 377; }
.vs-detail .thumb { flex: 36; } .vs-detail .rest { flex: 75; }
.vs-grid .thumb { flex: 298; } .vs-grid .rest { flex: 445; }

.detail { height: 244px; flex: none; border-top: 3px solid #1b2333; display: flex; flex-direction: column; background: #f0f0f0; }
.detail-head { height: 21px; flex: none; display: flex; background: linear-gradient(#eee, #d6d6d6); border-bottom: 1px solid #777; }
.detail-head button { width: 21px; border-right: 1px solid #777; }
.detail-head h2 { font-size: 15px; font-weight: 700; line-height: 18px; padding-left: 4px; }
.detail .tab { font-weight: 700; font-size: 15px; }
.detail-gap { height: 27px; flex: none; background: #eaeaea; }
.detail-cols { height: 20px; flex: none; display: grid; grid-template-columns: 19px 160px 1fr 18px; }
.detail-cols span, .grid th, .corner { background: linear-gradient(#ececec, #cdcdcd 55%, #e2e2e2); border-top: 1px solid #b0b0b0; border-bottom: 1px solid #b0b0b0; border-right: 1px solid #b0b0b0; }
.detail-cols span { line-height: 17px; padding-left: 3px; }
.detail-body { flex: 1; min-height: 0; display: flex; }
.dlist { flex: 1; overflow: hidden; }
.dlist li { height: 19px; border-bottom: 1px solid #fff; display: flex; align-items: center; padding-left: 1px; white-space: nowrap; }
.dlist span { margin-left: 2px; padding-left: 4px; width: 160px; line-height: 18px; }
.dlist .cur span { background: #d2d8dd; outline: 1px dashed #777; outline-offset: -1px; }

.editor { flex: 1; min-width: 0; display: flex; flex-direction: column; margin-right: 1px; background: #d9d9d9; }
.crumbs { height: 27px; flex: none; display: flex; align-items: center; gap: 7px; background: #ffa000; color: #fff; font-size: 14px; font-weight: 500; padding: 0 5px 3px 4px; white-space: nowrap; fill: #fff; }
.crumbs .winbtns { margin-left: auto; }
.edtools { height: 27px; flex: none; background: #eaeaea; padding: 0 11px 0 2px; }
.edtools .tb.on { height: 24px; margin: 0 1px 0 5px; }
.edtools .lab { padding: 0 8px 0 7px; }
.blockname { height: 21px; flex: none; font-size: 14px; font-weight: 500; line-height: 20px; padding-left: 25px; }
.gridwrap { flex: 1; min-height: 0; display: flex; position: relative; }
.gridclip { flex: 1; min-width: 0; overflow: hidden; background: #c3c3c3; }
.vside { width: 18px; flex: none; display: flex; flex-direction: column; }
.corner { height: 19px; flex: none; border-right: 0; margin-bottom: 1px; }
.vside .vscroll { flex: 1; }
.grid { width: 100%; table-layout: fixed; border-collapse: separate; border-spacing: 0; }
.c-no { width: 24px; } .c-ic { width: 20px; } .c-name { width: 170px; } .c-type { width: 320px; } .c-off { width: 60px; } .c-start { width: 218px; }
.c-keep { width: 69px; } .c-acc { width: 81px; } .c-wr { width: 49px; } .c-vis { width: 71px; } .c-set { width: 70px; } .c-more { width: 6px; }
.grid th { height: 20px; padding: 0 0 0 4px; font-size: 13px; font-weight: 400; line-height: 17px; text-align: left; white-space: nowrap; overflow: hidden; }
.grid th { box-shadow: inset 0 -1px #fff; }
.grid th.sel { background: linear-gradient(#eef1f5, #d8dfe7 55%, #e6ebf0); }
.grid th:last-child { padding-left: 2px; }
.grid td { height: 19px; padding: 0 0 0 4px; line-height: 18px; white-space: nowrap; border-bottom: 1px solid #fff; border-right: 1px solid #fff; background: #e0e0e0; }
.grid td.no { background: #ccc; color: #7a7a7a; font-size: 13px; border-right-color: #bbb; }
.grid td.tagc { padding: 0 0 0 2px; background: #d2d2d2; }
.grid td.name { padding: 0; border-right-color: #c4c4c4; }
.grid .lt { background: #f0f0f0; }
.grid td.st { color: #8a8a8a; }
.grid td.mon { background: #ffc864; }
.grid td.focus { position: relative; outline: 1px solid #3a66c8; outline-offset: -1px; }
.grid td.focus::after { content: ""; position: absolute; right: -2px; bottom: -2px; width: 4px; height: 4px; background: #1850d0; }
.grid td.ck { padding: 0; text-align: center; }
.cell { display: flex; align-items: center; height: 18px; }
.pad { height: 18px; width: calc(18px * var(--lv)); background: #e9e9e9; display: flex; align-items: center; justify-content: flex-end; padding-right: 8px; }
.pad i { width: 5px; height: 5px; background: #2a4cc8; box-shadow: 1px 1px #9ab; }
.cell .tw { width: 12px; height: 12px; margin: 0 8px 0 3px; }

input[type=checkbox] { appearance: none; display: block; width: 15px; height: 15px; margin: 0 auto; border: 1px solid #5c5c5c; border-radius: 3px; background: linear-gradient(#f4f4f4, #c6c6c6 60%, #eaeaea); }
input[type=checkbox].dim { border-color: #b6b6b6; background: linear-gradient(#f4f4f4, #e2e2e2 60%, #f0f0f0); }
input[type=checkbox].gray { background: #f0f0f0; }
input[type=checkbox].blue { border-color: #1f4a78; background: linear-gradient(#c8e4f8, #58c0ee 50%, #38e0f4); }
input[type=checkbox]:checked::before { content: ""; display: block; width: 9px; height: 9px; margin: 2px; background: #5a5a5a; clip-path: polygon(0 42%, 22% 36%, 40% 58%, 74% 0, 100% 0, 50% 100%, 32% 100%); }
input[type=checkbox].blue::before { background: #0a3c98 !important; }

.watermark { position: absolute; left: 375px; top: 430px; transform-origin: 0 0; transform: rotate(-30deg); color: rgba(255, 255, 255, .22); text-shadow: 0 0 2px rgba(255, 255, 255, .55); white-space: nowrap; pointer-events: none; }
.watermark p { font: 27px/30px "Liberation Sans", sans-serif; }
.watermark p:first-child { font: 41px/42px "Noto Sans CJK SC", sans-serif; }

.hscroll { height: 18px; flex: none; display: flex; background: #c3c3c3; padding: 0 18px 0 25px; }
.hscroll button { height: 18px; }
.hscroll .lf svg { transform: rotate(-90deg); } .hscroll .rt svg { transform: rotate(90deg); }
.hscroll .thumb { flex: 1364; background: linear-gradient(#eee, #d4d4d4); } .hscroll .rest { flex: 54; }
.hscroll .thumb::before { background: repeating-linear-gradient(90deg, #555 0 1px, transparent 1px 2px); }
.inspector { height: 28px; flex: none; border-top: 3px solid #1b2333; border-bottom: 1px solid #ddd; background: #b2b2b2; display: flex; align-items: center; justify-content: flex-end; gap: 5px; padding-right: 4px; }
.itabs { display: flex; align-items: stretch; gap: 2px; height: 24px; padding: 0 14px 0 4px; border-bottom: 3px solid #ffa000; align-self: stretch; }
.itab { width: 74px; justify-content: flex-start; gap: 4px; padding: 0 3px; font-size: 15px; color: #444; background: linear-gradient(#dcdcdc, #c4c4c4); border: 1px solid #888; border-bottom: 0; }
.itab.active { width: 80px; margin-bottom: -3px; padding-bottom: 3px; background: #f6f6f6; border-top: 2px solid #ffa000; color: #000; font-weight: 600; }
.itab .end { width: 14px; margin-left: auto; }

.rail-right { width: 24px; border-left: 1px solid #777; }
.rail-top { height: 30px; display: flex; align-items: center; justify-content: center; padding: 0 4px 5px 0; }
.vtab { width: 21px; flex-direction: column; justify-content: flex-start; gap: 3px; padding: 2px 4px 0 0; border: 1px solid #777; border-left: 0; color: #444; font-size: 15px; background: linear-gradient(90deg, #e8e8e8, #ccc); }
.vtab span { writing-mode: vertical-rl; text-orientation: sideways; }
.vtab-tasks { height: 74px; margin-bottom: 2px; background: #f0f0f0; color: #000; font-weight: 600; }
.vtab-lib { height: 58px; }

.statusbar { height: 29px; flex: none; display: flex; align-items: center; background: #1c1c1c; color: #fff; padding-bottom: 2px; }
.portal { width: 181px; display: flex; align-items: center; gap: 8px; padding-left: 35px; font-size: 14px; font-weight: 600; }
.docs { display: flex; gap: 3px; flex: 1; min-width: 0; }
.docs button { width: 113px; height: 20px; justify-content: flex-start; gap: 5px; padding-left: 3px; background: #c4c4c4; color: #222; }
.docs button.cur { background: #fff; color: #000; }
.sheet { width: 20px; height: 20px; background: #ccc; display: flex; align-items: center; justify-content: center; }
.status { display: flex; align-items: center; width: 348px; margin-left: 6px; padding: 0 20px 0 4px; border-left: 1px solid #555; align-self: stretch; }
.status span { margin-left: 5px; flex: 1; }
.bars { width: 28px; height: 12px; margin-right: 20px; background: linear-gradient(90deg, transparent 16px, #ffd0b8 16px 19px, transparent 19px), repeating-linear-gradient(90deg, #f05a1c 0 3px, #7a2c10 3px 4px); }

.taskbar { height: 30px; flex: none; position: relative; display: flex; align-items: center; color: #fff; }
.glass { position: absolute; inset: 0; background: linear-gradient(rgba(200, 215, 225, .9) 0 1px, rgba(120, 140, 165, .75) 1px, rgba(120, 140, 165, 0) 9px), linear-gradient(90deg, #2b7fb2 0, #2670a8 50px, #2f8fc4 150px, #3c9fd4 260px, #62b4de 400px, #3a9dd4 600px, #2a86c6 850px, #2170bb 1180px, #2274be 1265px, #5d7086 1285px, #5d7086 1350px, #5b83ad 1358px, #0a0e16 1368px, #0a0e16 1420px, #86a0bc 1428px, #8aa4c0 1640px, #6b7f95 1660px, #64778c); }
.orb { position: relative; width: 36px; height: 36px; margin: 0 15px 0 9px; flex: none; }
.orb svg { width: 36px; height: 36px; }
.app { position: relative; height: 28px; flex: none; border: 1px solid #e4eef6; border-radius: 3px; box-shadow: inset 0 0 2px #fff; background: linear-gradient(rgba(255, 255, 255, .65), rgba(255, 255, 255, .3)); }
.app1 { width: 35px; } .app2 { width: 43px; background: linear-gradient(rgba(255, 255, 255, .4), rgba(255, 255, 255, .12)); }
.stack { position: relative; width: 8px; height: 26px; margin-right: 3px; border-right: 1px solid #cfe0ec; background: linear-gradient(90deg, transparent 3px, #cfe0ec 3px 4px, transparent 4px); }
.tray { position: relative; margin-left: auto; display: flex; align-items: center; gap: 6px; }
.tray .lang { font-size: 11px; }
.mini { width: 14px; margin-left: 2px; display: flex; flex-direction: column; align-items: center; gap: 2px; }
.mini svg { width: 8px; height: 8px; }
.caret { width: 10px; height: 10px; margin-right: 4px; }
.tray time { margin: 0 12px 0 34px; }
.tray .ic + .ic { margin-left: 2px; }
.peek { position: relative; width: 15px; height: 29px; border: 1px solid #a9bccd; background: linear-gradient(90deg, #7d93aa, #4a6078); }
```
FILE: script.js
```js
const use = (id, cls = 'ic') => `<svg class="${cls}"><use href="#i-${id}"/></svg>`;

// Toolbars: "|" is a separator, "icon:cls:label" a button, "=text" a plain label.
const toolbar = list => list.map(t => {
  if (t === '|') return '<i class="sep"></i>';
  if (t[0] === '=') return `<span class="lab">${t.slice(1)}</span>`;
  const [icon, cls = '', label = ''] = t.split(':');
  return `<button class="tb ${cls}" aria-label="${label || icon}">${use(icon)}${label}</button>`;
}).join('');

document.getElementById('mainTools').innerHTML = toolbar([
  'new:n', 'open:n', 'save:w off:保存项目', 'print', '|', 'cut', 'copy', 'paste', 'x', '|',
  'undo', 'drop:s', 'redo', 'drop:s', '|', 'compile', 'dl', 'ul', 'pc', 'rt', '|',
  'plug0:w off:转至在线', 'plug1:w:转至离线', '|', 'nethelp', 'cpurun', 'cpustop', '|',
  'xref', '|', 'splith', 'splitv', '|'
]) + '<input class="search" type="text" aria-label="搜索" placeholder="&lt;在项目中搜索&gt;">' + toolbar(['binoc']);

document.getElementById('edTools').innerHTML = toolbar([
  'rowadd', 'rowadd2', '|', 'dbreset', 'dbok', 'levels', 'watch:on', '|', '=保持实际值', 'dblock', '|',
  '=快照', 'snapup', 'snapdn', '|', '=将快照值复制到起始值中', 'dbleft', 'dbdots', '|',
  '=将起始值加载为实际值', 'dbload', 'dbload2'
]) + '<span class="grow"></span><button class="tb" aria-label="视图">' + use('userview') + '</button>';

// level, twisty (d = open, r = closed), icon, label, status marks, row class
const tree = [
  [0, 'd', 'page', '项目2', 'kg', 'top proj'],
  [1, '', 'addobj', '添加新设备'],
  [1, '', 'net', '设备和网络'],
  [1, 'd', 'plc', 'PLC_1 [CPU 1215C AC/DC/Rly]', 'kg', 'top cur'],
  [2, '', 'cfg', '设备组态'],
  [2, '', 'diag', '在线和诊断'],
  [2, 'd', 'fblock', '程序块', 'g'],
  [3, '', 'addobj', '添加新块'],
  [3, '', 'ob', 'Main [OB1]', 'g'],
  [3, '', 'fc', 'FC_Diagnostic [FC25]', 'g'],
  [3, '', 'db', 'Diagnostic [DB4]', 'g'],
  [3, 'r', 'fsys', '系统块', 'g'],
  [2, 'r', 'fgear', '工艺对象'],
  [2, 'r', 'fsrc', '外部源文件'],
  [2, 'r', 'ftag', 'PLC 变量', 'g'],
  [2, 'r', 'ftype', 'PLC 数据类型'],
  [2, 'r', 'fwatch', '监控与强制表'],
  [2, 'r', 'fback', '在线备份'],
  [2, 'r', 'ftrace', 'Traces'],
  [2, 'r', 'fproxy', '设备代理数据'],
  [2, '', 'info', '程序信息'],
  [2, '', 'text', 'PLC 报警文本列表'],
  [2, 'r', 'fmod', '本地模块', 'k'],
  [2, 'r', 'fmod', '分布式 I/O', 'k'],
  [1, 'd', 'hmi', 'HMI_1 [TP1200 Comfort]', '', 'top'],
  [2, '', 'cfg', '设备组态'],
  [2, '', 'diag', '在线和诊断'],
  [2, '', 'wrench', '运行系统设置'],
  [2, 'd', 'fscreen', '画面'],
  [3, '', 'addobj', '添加新画面'],
  [3, '', 'root', '根画面'],
  [2, 'r', 'fmgmt', '画面管理']
];
const twisty = t => t ? use(t === 'd' ? 'down' : 'right', 'tw') : '<i class="tw"></i>';
document.getElementById('tree').innerHTML = tree.map(([lv, tw, ic, text, st = '', cls = '']) =>
  `<li class="${cls}"><span class="node" style="--lv:${lv}">${twisty(tw)}${use(ic)}${text}</span>` +
  `<span>${st.includes('k') ? use('ok') : ''}</span><span>${st.includes('g') ? use('dot') : ''}</span></li>`).join('');

document.getElementById('dlist').innerHTML = [
  ['cfg', '设备组态'], ['diag', '在线和诊断'], ['fblock', '程序块'], ['fgear', '工艺对象'],
  ['fsrc', '外部源文件'], ['ftag', 'PLC 变量'], ['ftype', 'PLC 数据类型'], ['fwatch', '监控与强制表']
].map(([ic, t], i) => `<li class="${i ? '' : 'cur'}">${use(ic)}<span>${t}</span></li>`).join('');

// Data block members
const epoch = 'DTL#1970-01-01-00:00:00';
const stamps = ['DTL#2020-05-22-18:37:36.770955', 'DTL#2020-05-22-19:07:30.696493', 'DTL#2020-05-22-19:27:38.139232'];
const members = [
  { lv: 0, open: true, name: 'Static', type: '', off: '' },
  { lv: 1, name: 'IOStatus', type: 'Array[0..127] of Bool', off: '0.0' },
  { lv: 1, name: 'PNStatus', type: 'Array[0..1023] of Bool', off: '16.0' },
  { lv: 1, name: 'DPStatus', type: 'Array[0..127] of Bool', off: '144.0' },
  { lv: 1, open: true, name: 'FAULT_time', type: 'Array[1..50] of DTL', off: '160.0' }
];
// Only the members that reach into the viewport are put in the table.
for (let i = 1; i <= 37; i++) {
  members.push({ lv: 2, name: `FAULT_time[${i}]`, type: 'DTL', off: `${160 + 12 * (i - 1)}.0`, start: epoch, mon: stamps[i - 1] || epoch });
}
const box = (cls, on, label) => `<input type="checkbox" class="${cls}"${on ? ' checked' : ''} aria-label="${label}">`;
document.getElementById('rows').innerHTML = members.map((m, i) => {
  const lt = m.lv === 1 ? 'lt' : '';
  const kinds = [['dim', 'dim', 0], ['', 'blue', 1], ['', 'gray', 1]][m.lv];
  const setKind = m.lv === 1 ? '' : 'dim';
  const pad = m.lv ? `<span class="pad" style="--lv:${m.lv}"><i></i></span>` : '';
  return `<tr><td class="no">${i + 1}</td><td class="tagc">${use('tag')}</td>` +
    `<td class="name ${lt}"><div class="cell">${pad}${twisty(m.open ? 'd' : 'r')}${m.name}</div></td>` +
    `<td class="${lt}">${m.type}</td><td>${m.off}</td>` +
    `<td class="${m.start ? 'st lt' : ''}">${m.start || ''}</td>` +
    `<td class="${m.mon ? 'mon' : ''}${i === 20 ? ' focus' : ''}">${m.mon || ''}</td>` +
    `<td class="ck ${m.lv ? 'lt' : ''}">${box(kinds[0], 0, '保持')}</td>` +
    ['可从 HMI 访问', '从 HMI 可写', '在 HMI 可见'].map(l => `<td class="ck ${lt}">${box(kinds[1], kinds[2], l)}</td>`).join('') +
    `<td class="ck ${lt}">${box(setKind, 0, '设定值')}</td><td class="${lt}"></td></tr>`;
}).join('');
```
